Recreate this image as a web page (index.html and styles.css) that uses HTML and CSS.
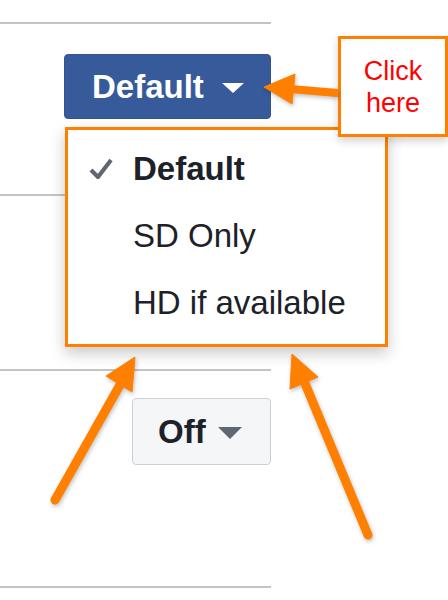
FILE: index.html
```html
<!DOCTYPE html>
<html>
<head>
<meta charset="utf-8">
<link rel="stylesheet" href="styles.css">
</head>
<body>
<div class="stage">
  <div class="panel">
    <div class="row row-1">
      <button class="btn btn-primary">
        <span class="btn-label">Default</span>
        <span class="caret caret-white"></span>
      </button>
    </div>
    <div class="row row-2"></div>
    <div class="row row-3">
      <button class="btn btn-plain">
        <span class="btn-label">Off</span>
        <span class="caret caret-gray"></span>
      </button>
    </div>
    <div class="row row-4"></div>
  </div>

  <div class="menu">
    <div class="menu-item selected">
      <span class="check">
        <svg width="24" height="21" viewBox="0 0 24 21"><path d="M2 12 L9 19 L22 2" fill="none" stroke="#606770" stroke-width="4.2" stroke-linejoin="miter"/></svg>
      </span>
      <span class="menu-text">Default</span>
    </div>
    <div class="menu-item">
      <span class="check"></span>
      <span class="menu-text">SD Only</span>
    </div>
    <div class="menu-item">
      <span class="check"></span>
      <span class="menu-text">HD if available</span>
    </div>
  </div>

  <div class="callout">Click<br>here</div>

  <svg class="arrows" width="448" height="600" viewBox="0 0 448 600">
    <g fill="#ff8000" stroke="#ff8000">
      <line x1="338" y1="93" x2="290" y2="89" stroke-width="8" stroke-linecap="butt"/>
      <polygon points="264,87 295,74 292,104" stroke-width="1" stroke-linejoin="round"/>
      <line x1="55" y1="500" x2="121" y2="383" stroke-width="9" stroke-linecap="round"/>
      <polygon points="135,357 106,376 132,392" stroke-width="1" stroke-linejoin="round"/>
      <line x1="368" y1="535" x2="304" y2="381" stroke-width="9" stroke-linecap="round"/>
      <polygon points="292,354 318,377 290,389" stroke-width="1" stroke-linejoin="round"/>
    </g>
  </svg>
</div>
</body>
</html>
```

FILE: styles.css
```css
html, body {
  margin: 0;
  padding: 0;
  background: #ffffff;
}

.stage {
  position: relative;
  width: 448px;
  height: 600px;
  overflow: hidden;
  font-family: "Liberation Sans", Arial, sans-serif;
}

.panel {
  width: 271px;
  padding-top: 22px;
}

.row {
  border-top: 2px solid #c4c4c4;
  display: flex;
  justify-content: flex-end;
  align-items: flex-start;
  box-sizing: border-box;
}

.row-1 { height: 172px; padding-top: 30px; }
.row-2 { height: 175px; }
.row-3 { height: 217px; padding-top: 27px; }
.row-4 { height: 13px; }

.btn {
  display: flex;
  align-items: center;
  box-sizing: border-box;
  font-family: "Liberation Sans", Arial, sans-serif;
  font-weight: bold;
  font-size: 33px;
  line-height: 1;
  border-radius: 4px;
  padding: 0;
  margin: 0;
}

.btn-primary {
  height: 65px;
  width: 207px;
  padding-left: 27px;
  background: #375a9a;
  color: #ffffff;
  border: 1px solid #33548f;
}

.btn-primary .caret {
  margin-left: 18px;
}

.btn-plain {
  height: 67px;
  width: 139px;
  padding-left: 25px;
  background: #f5f6f7;
  color: #1d2129;
  border: 1px solid #ccd0d5;
}

.btn-plain .caret {
  margin-left: 12px;
}

.caret {
  width: 0;
  height: 0;
  display: inline-block;
}

.caret-white {
  border-left: 11px solid transparent;
  border-right: 11px solid transparent;
  border-top: 10px solid #ffffff;
  margin-top: 2px;
}

.caret-gray {
  border-left: 12px solid transparent;
  border-right: 12px solid transparent;
  border-top: 12px solid #606770;
  margin-top: 2px;
}

.menu {
  position: absolute;
  left: 65px;
  top: 127px;
  width: 323px;
  height: 220px;
  box-sizing: border-box;
  border: 3px solid #ff8000;
  background: #ffffff;
  box-shadow: 0 6px 14px rgba(0, 0, 0, 0.22);
  padding: 5px 0 0 21px;
  color: #1d2129;
  font-size: 33px;
}

.menu-item {
  display: flex;
  align-items: center;
  height: 67px;
  line-height: 67px;
}

.menu-item.selected {
  font-weight: bold;
}

.check {
  width: 24px;
  height: 21px;
  margin-right: 20px;
  display: inline-flex;
}

.callout {
  position: absolute;
  left: 338px;
  top: 36px;
  width: 110px;
  height: 101px;
  box-sizing: border-box;
  border: 3px solid #ff8000;
  background: #ffffff;
  box-shadow: 0 4px 8px rgba(0, 0, 0, 0.18);
  color: #ff0000;
  font-size: 27px;
  line-height: 32px;
  text-align: center;
  padding-top: 16px;
}

.arrows {
  position: absolute;
  left: 0;
  top: 0;
  pointer-events: none;
  filter: drop-shadow(1px 2px 2px rgba(0, 0, 0, 0.25));
}
```
